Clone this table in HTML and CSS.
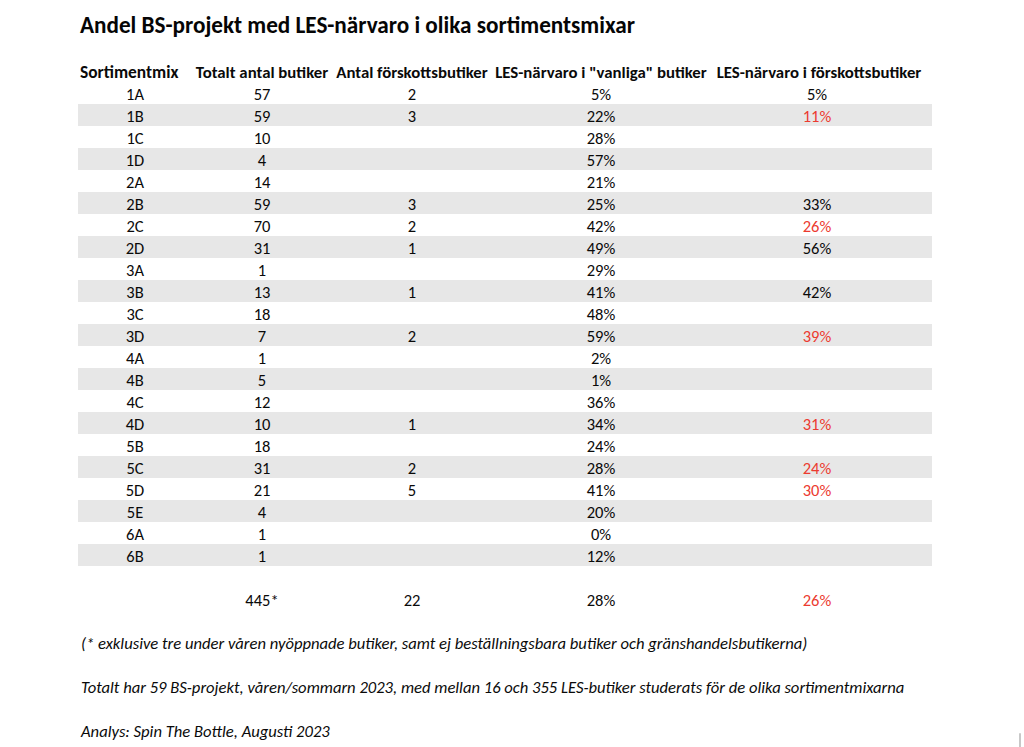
FILE: index.html
```html
<!DOCTYPE html>
<html lang="sv">
<head>
<meta charset="utf-8">
<title>Andel BS-projekt med LES-närvaro</title>
<link rel="stylesheet" href="styles.css">
</head>
<body>
<div class="page">
  <h1 class="title">Andel BS-projekt med LES-närvaro i olika sortimentsmixar</h1>
  <table class="sheet">
    <colgroup>
      <col class="c1"><col class="c2"><col class="c3"><col class="c4"><col class="c5">
    </colgroup>
    <thead>
      <tr>
        <th>Sortimentmix</th>
        <th>Totalt antal butiker</th>
        <th>Antal förskottsbutiker</th>
        <th>LES-närvaro i "vanliga" butiker</th>
        <th>LES-närvaro i förskottsbutiker</th>
      </tr>
    </thead>
    <tbody>
      <tr><td>1A</td><td>57</td><td>2</td><td>5%</td><td>5%</td></tr>
      <tr class="band"><td>1B</td><td>59</td><td>3</td><td>22%</td><td class="red">11%</td></tr>
      <tr><td>1C</td><td>10</td><td></td><td>28%</td><td></td></tr>
      <tr class="band"><td>1D</td><td>4</td><td></td><td>57%</td><td></td></tr>
      <tr><td>2A</td><td>14</td><td></td><td>21%</td><td></td></tr>
      <tr class="band"><td>2B</td><td>59</td><td>3</td><td>25%</td><td>33%</td></tr>
      <tr><td>2C</td><td>70</td><td>2</td><td>42%</td><td class="red">26%</td></tr>
      <tr class="band"><td>2D</td><td>31</td><td>1</td><td>49%</td><td>56%</td></tr>
      <tr><td>3A</td><td>1</td><td></td><td>29%</td><td></td></tr>
      <tr class="band"><td>3B</td><td>13</td><td>1</td><td>41%</td><td>42%</td></tr>
      <tr><td>3C</td><td>18</td><td></td><td>48%</td><td></td></tr>
      <tr class="band"><td>3D</td><td>7</td><td>2</td><td>59%</td><td class="red">39%</td></tr>
      <tr><td>4A</td><td>1</td><td></td><td>2%</td><td></td></tr>
      <tr class="band"><td>4B</td><td>5</td><td></td><td>1%</td><td></td></tr>
      <tr><td>4C</td><td>12</td><td></td><td>36%</td><td></td></tr>
      <tr class="band"><td>4D</td><td>10</td><td>1</td><td>34%</td><td class="red">31%</td></tr>
      <tr><td>5B</td><td>18</td><td></td><td>24%</td><td></td></tr>
      <tr class="band"><td>5C</td><td>31</td><td>2</td><td>28%</td><td class="red">24%</td></tr>
      <tr><td>5D</td><td>21</td><td>5</td><td>41%</td><td class="red">30%</td></tr>
      <tr class="band"><td>5E</td><td>4</td><td></td><td>20%</td><td></td></tr>
      <tr><td>6A</td><td>1</td><td></td><td>0%</td><td></td></tr>
      <tr class="band"><td>6B</td><td>1</td><td></td><td>12%</td><td></td></tr>
      <tr class="spacer"><td colspan="5"></td></tr>
      <tr class="total"><td></td><td>445*</td><td>22</td><td>28%</td><td class="red">26%</td></tr>
    </tbody>
  </table>
  <div class="notes">
    <p>(* exklusive tre under våren nyöppnade butiker, samt ej beställningsbara butiker och gränshandelsbutikerna)</p>
    <p>Totalt har 59 BS-projekt, våren/sommarn 2023, med mellan 16 och 355 LES-butiker studerats för de olika sortimentmixarna</p>
    <p>Analys: Spin The Bottle, Augusti 2023</p>
  </div>
</div>
<div class="scroll-thumb"></div>
</body>
</html>
```

FILE: styles.css
```css
html, body {
  margin: 0;
  padding: 0;
  background: #ffffff;
}

body {
  font-family: "Carlito", "Lato", "Liberation Sans", sans-serif;
  color: #0a0a0a;
  width: 1024px;
  height: 747px;
  overflow: hidden;
  position: relative;
}

.page {
  padding-left: 78px;
}

.title {
  margin: 0;
  height: 60px;
  padding-left: 2px;
  box-sizing: border-box;
  padding-top: 11px;
  font-size: 23.2px;
  line-height: 28px;
  font-weight: 700;
  color: #050505;
}

.sheet {
  border-collapse: collapse;
  table-layout: fixed;
  width: 854px;
  font-size: 16.5px;
}

.c1 { width: 110px; }
.c2 { width: 148px; }
.c3 { width: 152px; }
.c4 { width: 226px; }
.c5 { width: 218px; }

.sheet th,
.sheet td {
  height: 22px;
  padding: 0;
  text-align: center;
  vertical-align: bottom;
  line-height: 19px;
  white-space: nowrap;
}

.sheet th {
  font-weight: 700;
  font-size: 16.8px;
}

.sheet th:first-child {
  text-align: left;
  padding-left: 2px;
  font-size: 17.4px;
}

.sheet td:first-child {
  padding-left: 4px;
}

.sheet th:last-child {
  padding-right: 8px;
}

.sheet td:last-child {
  padding-right: 12px;
}

.band td {
  background: #e7e7e7;
}

.red {
  color: #ec3a30;
}

.notes {
  margin-top: 22px;
  padding-left: 3px;
}

.notes p {
  margin: 0 0 22px 0;
  height: 22px;
  line-height: 22px;
  font-size: 16.6px;
  font-style: italic;
}

.scroll-thumb {
  position: absolute;
  right: 3px;
  top: 733px;
  width: 2px;
  height: 20px;
  background: #c8c8c8;
  border-radius: 1px;
}
```
